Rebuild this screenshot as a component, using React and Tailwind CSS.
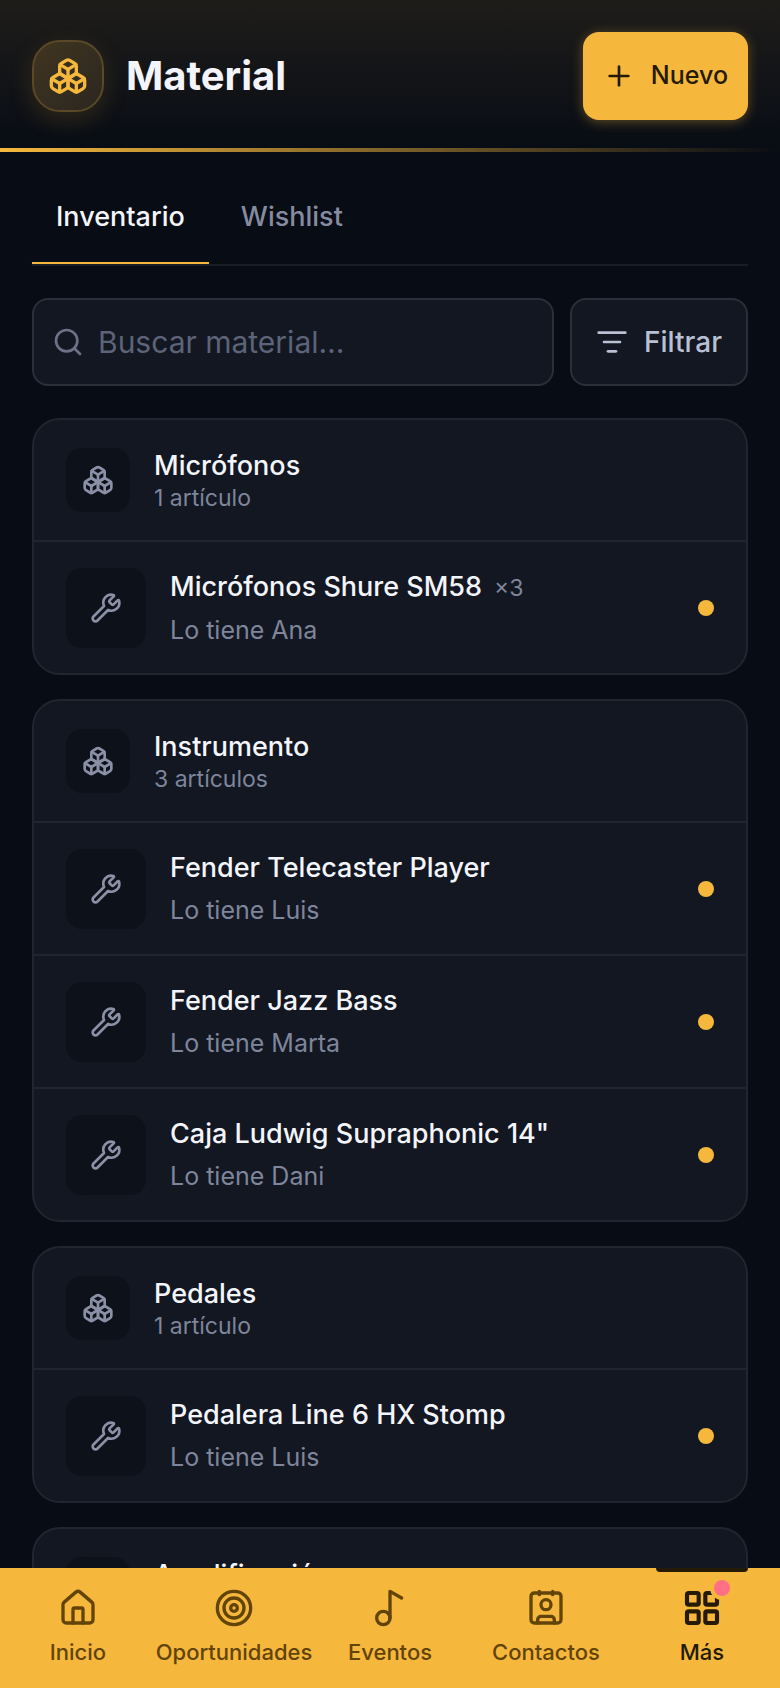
import { Boxes, House, Music2, Plus, Search, Target, Wrench } from "lucide-react";

const GROUPS = [
  {
    name: "Micrófonos",
    items: [{ name: "Micrófonos Shure SM58", quantity: 3, holder: "Ana" }],
  },
  {
    name: "Instrumento",
    items: [
      { name: "Fender Telecaster Player", holder: "Luis" },
      { name: "Fender Jazz Bass", holder: "Marta" },
      { name: 'Caja Ludwig Supraphonic 14"', holder: "Dani" },
    ],
  },
  {
    name: "Pedales",
    items: [{ name: "Pedalera Line 6 HX Stomp", holder: "Luis" }],
  },
  {
    name: "Amplificación",
    items: [],
  },
];

function Icon({ className, strokeWidth = 2, children }) {
  return (
    <svg
      viewBox="0 0 24 24"
      fill="none"
      stroke="currentColor"
      strokeWidth={strokeWidth}
      strokeLinecap="round"
      strokeLinejoin="round"
      aria-hidden="true"
      className={className}
    >
      {children}
    </svg>
  );
}

function FilterIcon({ className }) {
  return (
    <Icon className={className}>
      <path d="M2 5h20" />
      <path d="M6 12h12" />
      <path d="M9 19h6" />
    </Icon>
  );
}

function ContactIcon({ className }) {
  return (
    <Icon className={className}>
      <path d="M16 2v2" />
      <path d="M8 2v2" />
      <rect x="3" y="3" width="18" height="18" rx="2" />
      <circle cx="12" cy="10" r="3" />
      <path d="M7 21v-2a2 2 0 0 1 2-2h6a2 2 0 0 1 2 2v2" />
    </Icon>
  );
}

function GridIcon({ className }) {
  return (
    <Icon className={className} strokeWidth={2.5}>
      <rect x="3" y="3" width="7" height="7" rx="1" />
      <rect x="14" y="3" width="7" height="7" rx="1" />
      <rect x="14" y="14" width="7" height="7" rx="1" />
      <rect x="3" y="14" width="7" height="7" rx="1" />
    </Icon>
  );
}

const NAV = [
  { label: "Inicio", icon: House },
  { label: "Oportunidades", icon: Target },
  { label: "Eventos", icon: Music2 },
  { label: "Contactos", icon: ContactIcon },
  { label: "Más", icon: GridIcon, active: true },
];

function Header() {
  return (
    <header className="shrink-0">
      <div className="flex items-start justify-between bg-linear-to-b from-[#1f1d1a] to-[#080c14] px-8 pt-8 pb-7">
        <div className="flex items-center gap-[22px] pt-2">
          <div className="flex size-18 items-center justify-center rounded-[28px] border-2 border-[#5a4826] bg-linear-to-br from-[#40351f] to-[#2b2620] text-[#f5b83d] shadow-[0_8px_24px_rgba(245,184,61,0.15)]">
            <Boxes className="size-10" />
          </div>
          <h1 className="text-[40px] leading-none font-bold text-[#f4f5fa]">Material</h1>
        </div>
        <button
          type="button"
          className="flex h-22 items-center gap-4 rounded-2xl bg-[#f5b83d] px-5 text-[25px] font-medium text-[#241a05] shadow-[0_2px_12px_rgba(245,184,61,0.35)]"
        >
          <Plus className="size-8" />
          Nuevo
        </button>
      </div>
      <div className="h-1 bg-linear-to-r from-[#f5b83d] to-[#f5b83d]/0" />
    </header>
  );
}

function Tabs() {
  return (
    <div role="tablist" className="flex border-b-2 border-[#191d25] text-[27px] font-medium">
      <button
        type="button"
        role="tab"
        aria-selected="true"
        className="h-24 border-b-2 border-[#f5b83d] px-6 pt-1 text-[#f4f5fa]"
      >
        Inventario
      </button>
      <button
        type="button"
        role="tab"
        aria-selected="false"
        className="h-24 border-b-2 border-transparent px-8 pt-1 text-[#858ba0]"
      >
        Wishlist
      </button>
    </div>
  );
}

function Toolbar() {
  return (
    <div className="mt-8 flex gap-4">
      <label className="flex h-22 min-w-0 flex-1 items-center gap-[14px] rounded-2xl border-2 border-[#2b2f39] bg-[#121722] px-[18px] text-[#6b7187]">
        <Search className="size-8 shrink-0" />
        <input
          type="text"
          aria-label="Buscar material"
          placeholder="Buscar material…"
          className="h-12 w-full min-w-0 bg-transparent text-[30px] text-[#f4f5fa] outline-none placeholder:text-[#5d6378]"
        />
      </label>
      <button
        type="button"
        className="flex h-22 items-center gap-4 rounded-2xl border-2 border-[#2b2f39] bg-[#121722] px-6 text-[28px] font-medium text-[#b9c0d3]"
      >
        <FilterIcon className="size-8" />
        Filtrar
      </button>
    </div>
  );
}

function Item({ item }) {
  return (
    <li className="flex items-center gap-6 border-t-2 border-[#20252f] px-8 pt-[26px] pb-[25px]">
      <div className="flex size-20 shrink-0 items-center justify-center rounded-2xl bg-[#0c111a] text-[#8a90a5]">
        <Wrench className="size-8" />
      </div>
      <div className="min-w-0 flex-1">
        <p className="flex items-baseline gap-3 text-[27px] leading-9 font-medium text-[#f4f5fa]">
          {item.name}
          {item.quantity && (
            <span className="text-[23px] font-normal text-[#7f859a]">×{item.quantity}</span>
          )}
        </p>
        <p className="mt-1.5 text-[25px] leading-9 text-[#7f859a]">Lo tiene {item.holder}</p>
      </div>
      <span className="size-4 shrink-0 rounded-full bg-[#f5b83d]" />
    </li>
  );
}

function Group({ group }) {
  const count = group.items.length || 1;
  return (
    <section className="overflow-hidden rounded-[28px] border-2 border-[#20252f] bg-[#121722]">
      <div className="flex items-center gap-6 px-8 py-7">
        <div className="flex size-16 shrink-0 items-center justify-center rounded-2xl bg-[#0c111a] text-[#8a90a5]">
          <Boxes className="size-8" />
        </div>
        <div>
          <h2 className="text-[27px] leading-9 font-medium text-[#f4f5fa]">{group.name}</h2>
          <p className="text-[23px] leading-7 text-[#7f859a]">
            {count} {count === 1 ? "artículo" : "artículos"}
          </p>
        </div>
      </div>
      <ul>
        {group.items.map((item) => (
          <Item key={item.name} item={item} />
        ))}
      </ul>
    </section>
  );
}

function BottomNav() {
  return (
    <nav className="grid h-30 shrink-0 grid-cols-5 bg-[#f5b83d] text-[22px] font-medium">
      {NAV.map(({ label, icon: NavIcon, active }) => (
        <a
          key={label}
          href="#"
          aria-current={active ? "page" : undefined}
          className={
            active
              ? "relative flex flex-col items-center gap-2 pt-5 text-[#241a05]"
              : "relative flex flex-col items-center gap-2 pt-5 text-[#634408]"
          }
        >
          {active && <span className="absolute inset-x-8 top-0 h-1 rounded-b-sm bg-[#241a05]" />}
          <span className="relative">
            <NavIcon className="size-10" />
            {active && (
              <span className="absolute -top-3 -right-3 size-6 rounded-full border-4 border-[#f5b83d] bg-[#ff7085]" />
            )}
          </span>
          <span className="leading-8">{label}</span>
        </a>
      ))}
    </nav>
  );
}

export default function App() {
  return (
    <div className="flex h-screen flex-col bg-[#080c14] font-['Inter',sans-serif]">
      <Header />
      <main className="min-h-0 flex-1 overflow-y-auto px-8 pt-4 pb-8 [scrollbar-width:none]">
        <Tabs />
        <Toolbar />
        <div className="mt-8 flex flex-col gap-6">
          {GROUPS.map((group) => (
            <Group key={group.name} group={group} />
          ))}
        </div>
      </main>
      <BottomNav />
    </div>
  );
}
